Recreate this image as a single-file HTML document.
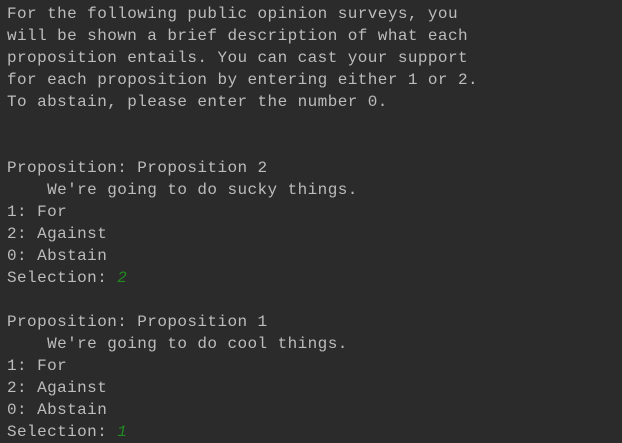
<!DOCTYPE html>
<html><head><style>
html,body{margin:0;padding:0;background:#2b2b2b;width:622px;height:443px;overflow:hidden}
pre{margin:0;padding:3px 0 0 7px;font-family:"Liberation Mono",monospace;font-size:16px;letter-spacing:0.42px;line-height:22px;color:#bcbcbc}
.g{color:#1f8a1f;font-style:italic}
</style></head><body><pre>For the following public opinion surveys, you
will be shown a brief description of what each
proposition entails. You can cast your support
for each proposition by entering either 1 or 2.
To abstain, please enter the number 0.


Proposition: Proposition 2
    We're going to do sucky things.
1: For
2: Against
0: Abstain
Selection: <span class="g">2</span>

Proposition: Proposition 1
    We're going to do cool things.
1: For
2: Against
0: Abstain
Selection: <span class="g">1</span></pre></body></html>
